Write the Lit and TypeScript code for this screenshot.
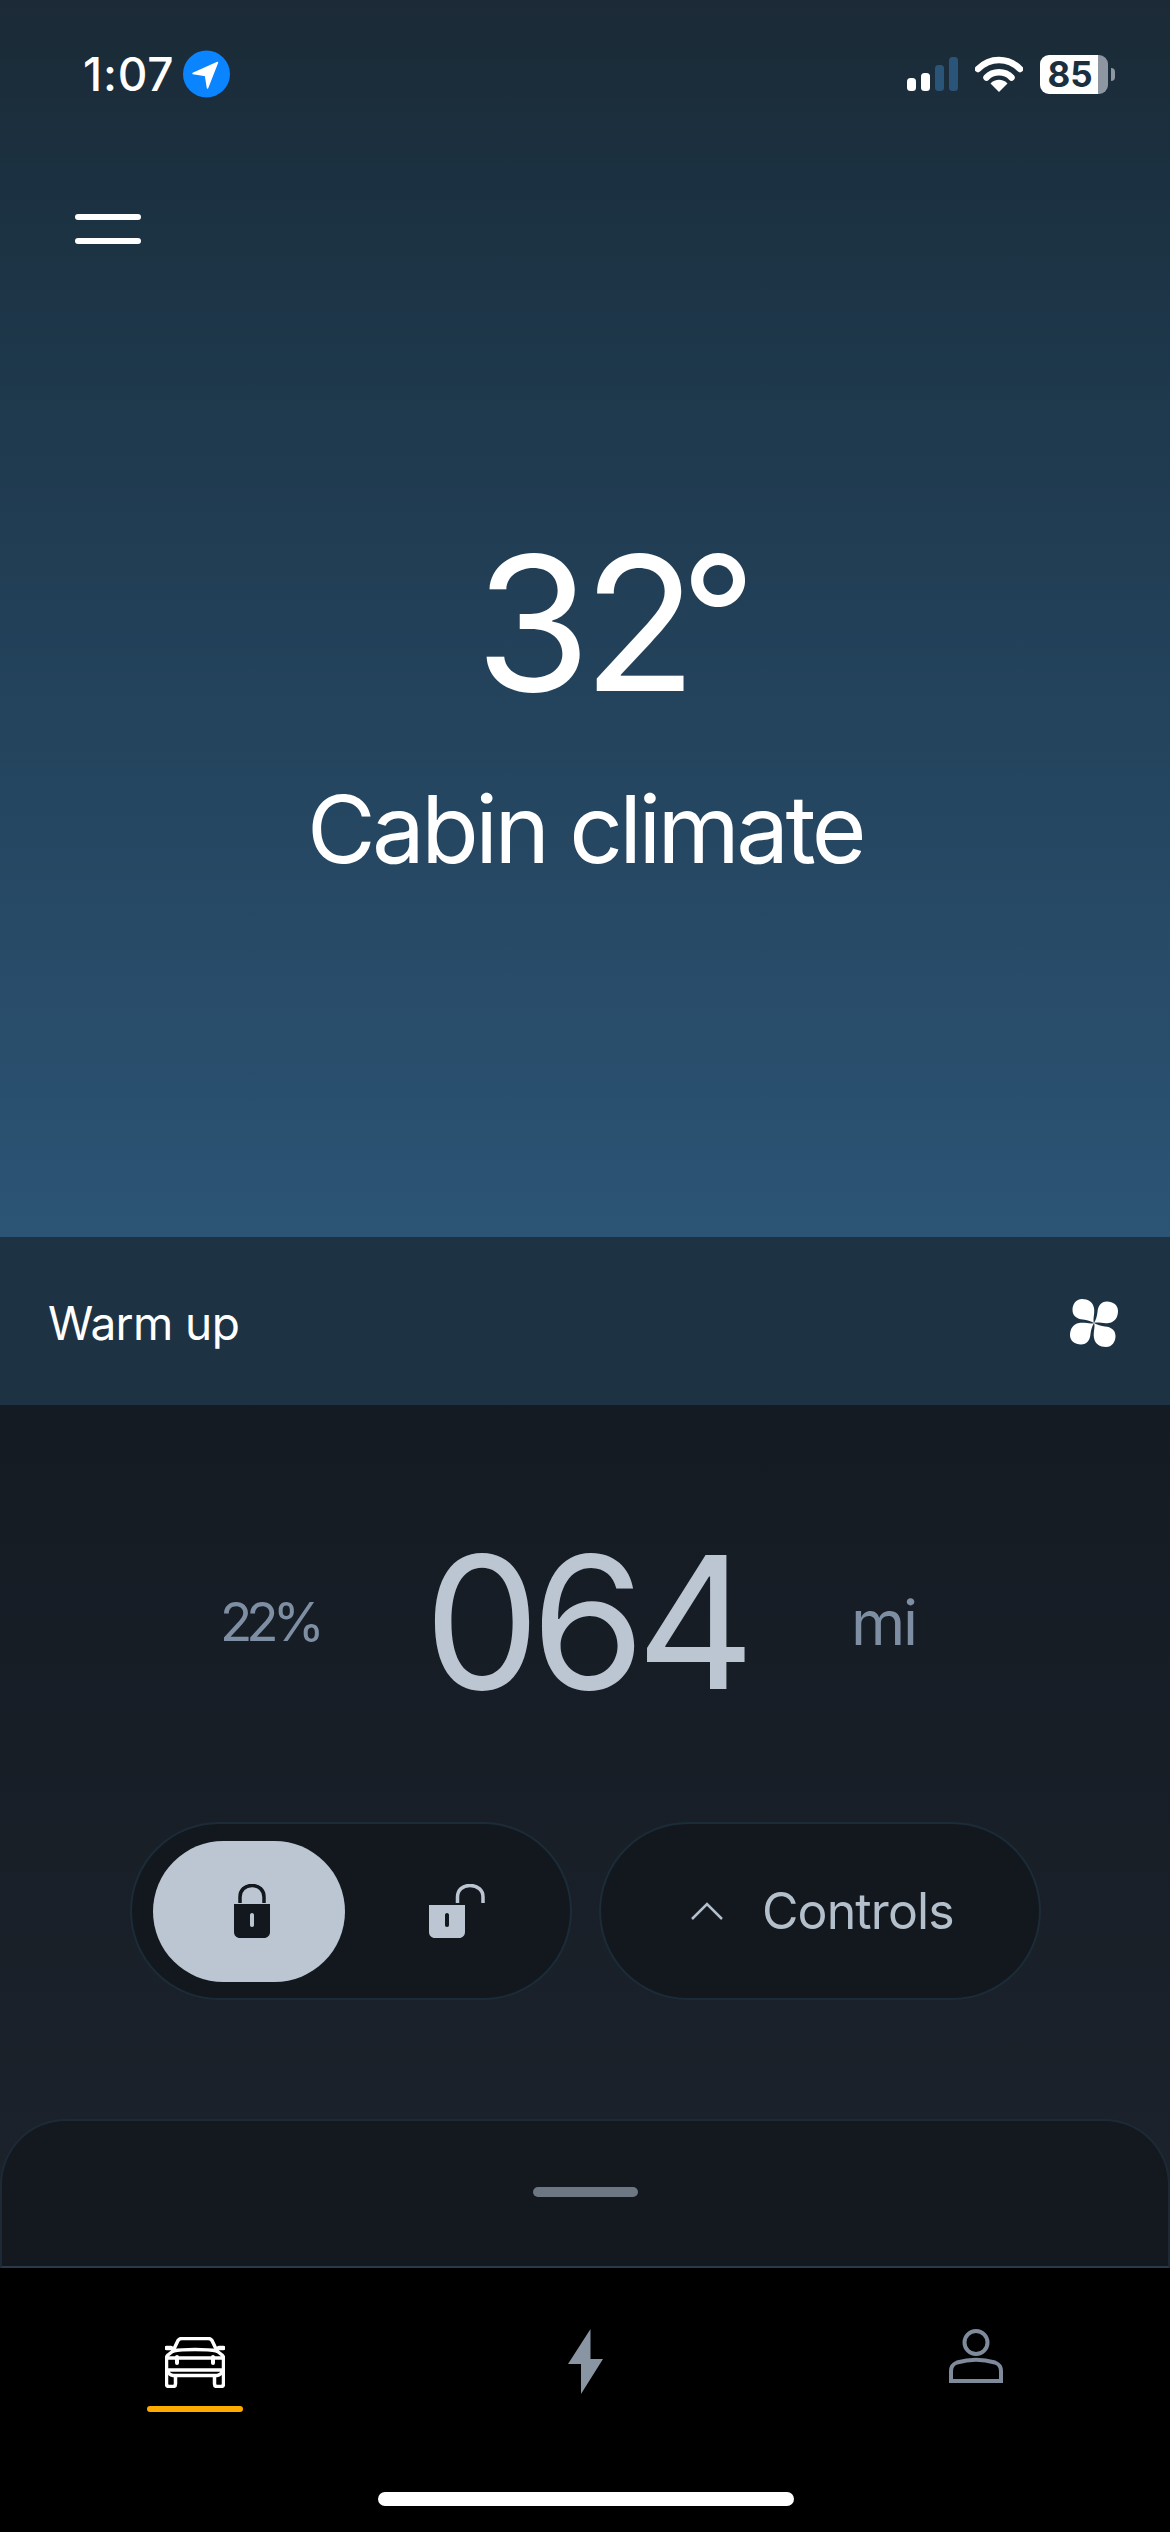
import { LitElement, html, css, svg } from 'lit';
import { customElement } from 'lit/decorators.js';

const fanPetal = 'M24 24C22.5 20 25 15 24 9C23 3 18 0 12 0C6 0 2.5 5 2.5 11C2.5 17 7 20 13 20.5C17 21 21 22 24 24Z';

const icon = (w: number, h: number, body: unknown, cls = '') => html`
  <svg class=${cls} width=${w} height=${h} viewBox="0 0 ${w} ${h}" fill="none">${body}</svg>
`;

@customElement('app-root')
export class AppRoot extends LitElement {
  static styles = css`
    :host {
      display: block;
      width: 1170px;
      height: 2532px;
      background: #000;
      font-family: 'Inter', 'Liberation Sans', sans-serif;
      color: #fff;
      overflow: hidden;
    }

    .hero {
      height: 1237px;
      box-sizing: border-box;
      background: linear-gradient(180deg, #1b2a36 0%, #1b3141 15%, #224058 50%, #2c5475 100%);
      display: flex;
      flex-direction: column;
    }

    .status {
      height: 48px;
      margin-top: 50px;
      padding: 0 55px 0 83px;
      display: flex;
      align-items: center;
      justify-content: space-between;
    }

    .status-left {
      display: flex;
      align-items: center;
      gap: 9px;
    }

    .time {
      font-size: 46px;
      font-weight: 500;
      line-height: 48px;
      letter-spacing: 0.8px;
    }

    .status-right {
      display: flex;
      align-items: center;
    }

    .bars {
      margin-right: 17px;
    }

    .wifi {
      margin-right: 17px;
    }

    .battery {
      display: flex;
      align-items: center;
      gap: 3px;
    }

    .battery-body {
      width: 68px;
      height: 39px;
      box-sizing: border-box;
      border-radius: 9px;
      background: linear-gradient(90deg, #fff 0 58px, #8d96a1 58px);
      color: #1c2f3e;
      font-size: 35px;
      font-weight: 700;
      line-height: 39px;
      text-align: center;
      padding-right: 8px;
    }

    .battery-cap {
      width: 4px;
      height: 13px;
      border-radius: 0 4px 4px 0;
      background: #8d96a1;
    }

    .menu {
      margin: 116px 0 0 75px;
      width: 66px;
      display: flex;
      flex-direction: column;
      gap: 18px;
    }

    .menu span {
      height: 6px;
      border-radius: 3px;
      background: #fff;
    }

    .temp {
      margin-top: 279px;
      padding-right: 14px;
      font-size: 187px;
      font-weight: 400;
      line-height: 200px;
      letter-spacing: -8px;
      text-align: center;
    }

    .temp-tight {
      letter-spacing: -16px;
    }

    .degree {
      display: inline-block;
      width: 0;
      font-size: 164px;
      line-height: 0;
      letter-spacing: 0;
      vertical-align: 18px;
    }

    .temp-label {
      margin-top: 51px;
      font-size: 94px;
      font-weight: 400;
      line-height: 110px;
      letter-spacing: -3.6px;
      text-align: center;
    }

    .warm {
      height: 168px;
      box-sizing: border-box;
      padding: 3px 52px 0 48px;
      background: #1d3344;
      display: flex;
      align-items: center;
      justify-content: space-between;
      font-size: 46px;
      font-weight: 400;
      letter-spacing: -0.6px;
    }

    .panel {
      height: 863px;
      box-sizing: border-box;
      background: linear-gradient(180deg, #151b23 0%, #1c232c 100%);
      display: flex;
      flex-direction: column;
    }

    .range {
      margin-top: 137px;
      height: 160px;
      display: grid;
      grid-template-columns: 220px 97px 88px 360px 86px auto;
      align-items: center;
    }

    .pct {
      grid-column: 2;
      font-size: 53px;
      font-weight: 400;
      color: #7f8fa3;
      letter-spacing: -6px;
      white-space: nowrap;
    }

    .miles {
      grid-column: 4;
      font-size: 184px;
      font-weight: 400;
      line-height: 160px;
      letter-spacing: -9px;
      color: #bcc5d2;
      text-align: center;
      white-space: nowrap;
    }

    .unit {
      grid-column: 6;
      font-size: 62px;
      font-weight: 400;
      color: #7f8fa3;
      letter-spacing: -2.4px;
    }

    .actions {
      margin-top: 120px;
      padding-left: 130px;
      display: flex;
      gap: 27px;
    }

    .pill {
      width: 442px;
      height: 178px;
      box-sizing: border-box;
      border: 2px solid #1b2c38;
      border-radius: 89px;
      background: #13181f;
      display: flex;
      align-items: center;
    }

    .lock-pill {
      padding-left: 21px;
    }

    .lock-on {
      width: 192px;
      height: 141px;
      box-sizing: border-box;
      padding-left: 6px;
      border-radius: 71px;
      background: #bcc5d2;
      display: flex;
      align-items: center;
      justify-content: center;
    }

    .lock-off {
      margin-left: 84px;
      display: flex;
    }

    .controls {
      padding-left: 90px;
      gap: 39px;
      font-size: 50px;
      font-weight: 400;
      letter-spacing: -0.9px;
      color: #b4bfcc;
    }

    .sheet {
      margin: auto 0 0;
      height: 149px;
      box-sizing: border-box;
      border: 2px solid #1d2a35;
      border-bottom-color: #2a3a48;
      border-radius: 66px 66px 0 0;
      background: #14181f;
      display: flex;
      justify-content: center;
      padding-top: 66px;
    }

    .handle {
      width: 105px;
      height: 10px;
      border-radius: 5px;
      background: #6d7683;
    }

    .nav {
      height: 264px;
      position: relative;
      background: #000;
      display: grid;
      grid-template-columns: 390px 390px 390px;
    }

    .tab {
      display: flex;
      flex-direction: column;
      align-items: center;
    }

    .tab.car {
      padding-top: 69px;
    }

    .tab.bolt {
      padding-top: 61px;
    }

    .tab.person {
      padding: 61px 0 0 2px;
    }

    .underline {
      width: 96px;
      height: 6px;
      margin-top: 18px;
      border-radius: 3px;
      background: #ffab00;
    }

    .home {
      position: absolute;
      left: 378px;
      bottom: 26px;
      width: 416px;
      height: 14px;
      border-radius: 7px;
      background: #fff;
    }
  `;

  render() {
    return html`
      <section class="hero">
        <div class="status">
          <div class="status-left">
            <span class="time">1:07</span>
            ${icon(47, 48, svg`
              <circle cx="23.5" cy="24" r="23.5" fill="#0a84ff" />
              <path d="M34.5 12.5L10 23.5L22.5 25.5L24.5 38Z" fill="#fff" stroke="#fff" stroke-width="1.5" stroke-linejoin="round" />
            `)}
          </div>
          <div class="status-right">
            ${icon(51, 34, svg`
              <rect x="0" y="21" width="9" height="13" rx="3.5" fill="#fff" />
              <rect x="14" y="16" width="9" height="18" rx="3.5" fill="#fff" />
              <rect x="28" y="8" width="9" height="26" rx="3.5" fill="#2a5578" />
              <rect x="42" y="0" width="9" height="34" rx="3.5" fill="#2a5578" />
            `, 'bars')}
            ${icon(48, 36, svg`
              <path d="M3 13C15 1 33 1 45 13" stroke="#fff" stroke-width="6.5" stroke-linecap="round" />
              <path d="M11.5 21.5C18 14.5 30 14.5 36.5 21.5" stroke="#fff" stroke-width="6.5" stroke-linecap="round" />
              <path d="M15.5 27.5C20 22.5 28 22.5 32.5 27.5L24 36Z" fill="#fff" />
            `, 'wifi')}
            <div class="battery">
              <div class="battery-body">85</div>
              <div class="battery-cap"></div>
            </div>
          </div>
        </div>

        <div class="menu"><span></span><span></span></div>

        <div class="temp">3<span class="temp-tight">2</span><span class="degree">°</span></div>
        <div class="temp-label">Cabin climate</div>
      </section>

      <section class="warm">
        <span>Warm up</span>
        ${icon(48, 48, svg`
          <g fill="#fff">
            <path d=${fanPetal} />
            <path d=${fanPetal} transform="rotate(90 24 24)" />
            <path d=${fanPetal} transform="rotate(180 24 24)" />
            <path d=${fanPetal} transform="rotate(270 24 24)" />
          </g>
        `)}
      </section>

      <section class="panel">
        <div class="range">
          <span class="pct">22%</span>
          <span class="miles">064</span>
          <span class="unit">mi</span>
        </div>

        <div class="actions">
          <div class="pill lock-pill">
            <div class="lock-on">
              ${icon(36, 54, svg`
                <path d="M6 19V13C6 6 11 1.5 18 1.5C25 1.5 30 6 30 13V19" stroke="#13181f" stroke-width="3.5" />
                <path fill-rule="evenodd" d="M0 20H36V48C36 51.5 33.5 54 30 54H6C2.5 54 0 51.5 0 48ZM18 29C16.6 29 16 30 16 31V41C16 42 16.6 43 18 43C19.4 43 20 42 20 41V31C20 30 19.4 29 18 29Z" fill="#13181f" />
              `)}
            </div>
            <div class="lock-off">
              ${icon(57, 54, svg`
                <path d="M28.5 19V13C28.5 6 33.5 1.5 41 1.5C48.5 1.5 54 6 54 13V19" stroke="#bcc5d2" stroke-width="3.5" />
                <path fill-rule="evenodd" d="M0 21H36V48C36 51.5 33.5 54 30 54H6C2.5 54 0 51.5 0 48ZM18 29C16.6 29 16 30 16 31V41C16 42 16.6 43 18 43C19.4 43 20 42 20 41V31C20 30 19.4 29 18 29Z" fill="#bcc5d2" />
              `)}
            </div>
          </div>

          <div class="pill controls">
            ${icon(32, 18, svg`
              <path d="M1 17L16 2L31 17" stroke="#b4bfcc" stroke-width="2.5" />
            `)}
            <span>Controls</span>
          </div>
        </div>

        <div class="sheet"><div class="handle"></div></div>
      </section>

      <nav class="nav">
        <div class="tab car">
          ${icon(60, 51, svg`
            <g stroke="#fff" stroke-width="3.5" stroke-linecap="round" stroke-linejoin="round">
              <path d="M8 14L13 3.5C14 2 15 1.5 17 1.5H43C45 1.5 46 2 47 3.5L52 14" />
              <path d="M8 14C18 12 42 12 52 14" />
              <path d="M1.5 11H6M54 11H58.5" stroke-width="4.5" />
              <path d="M8 14L3 18C2 19 1.5 20 1.5 21V47C1.5 49 2.5 49.5 4 49.5H8C10 49.5 10.5 48.5 10.5 47V39" />
              <path d="M52 14L57 18C58 19 58.5 20 58.5 21V47C58.5 49 57.5 49.5 56 49.5H52C50 49.5 49.5 48.5 49.5 47V39" />
              <path d="M1.5 21H58.5" />
              <path d="M2 33C3 36 5 38 8 38.5H52C55 38 57 36 58 33H2Z" />
              <path d="M12 20V26M48 20V26" stroke-width="4" />
            </g>
          `)}
          <div class="underline"></div>
        </div>
        <div class="tab bolt">
          ${icon(35, 65, svg`
            <path d="M22.5 0V30H35L13 65V35H0Z" fill="#8a95a3" />
          `)}
        </div>
        <div class="tab person">
          ${icon(54, 54, svg`
            <g stroke="#7f8b9a" stroke-width="4">
              <circle cx="27" cy="13.5" r="11.5" />
              <path d="M2 52V42C2 37 4 35 8 33.5C20 30 34 30 46 33.5C50 35 52 37 52 42V52Z" />
            </g>
          `)}
        </div>
        <div class="home"></div>
      </nav>
    `;
  }
}
